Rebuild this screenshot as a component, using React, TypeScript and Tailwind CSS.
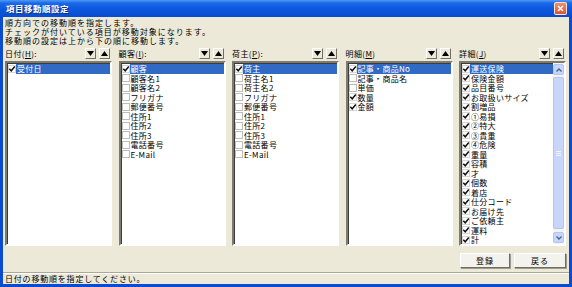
import React from 'react'

type Item = { label: string; on: boolean }

const jp = "font-['Noto_Sans_CJK_JP','Noto_Sans',sans-serif]"

const columns: { title: string; key: string; colon: boolean; items: Item[]; scroll?: boolean }[] = [
  { title: '日付', key: 'H', colon: true, items: [{ label: '受付日', on: true }] },
  {
    title: '顧客',
    key: 'I',
    colon: true,
    items: [
      { label: '顧客', on: true },
      ...['顧客名1', '顧客名2', 'フリガナ', '郵便番号', '住所1', '住所2', '住所3', '電話番号', 'E-Mail'].map((l) => ({ label: l, on: false })),
    ],
  },
  {
    title: '荷主',
    key: 'P',
    colon: true,
    items: [
      { label: '荷主', on: true },
      ...['荷主名1', '荷主名2', 'フリガナ', '郵便番号', '住所1', '住所2', '住所3', '電話番号', 'E-Mail'].map((l) => ({ label: l, on: false })),
    ],
  },
  {
    title: '明細',
    key: 'M',
    colon: false,
    items: [
      { label: '記事・商品No', on: true },
      { label: '記事・商品名', on: false },
      { label: '単価', on: false },
      { label: '数量', on: true },
      { label: '金額', on: true },
    ],
  },
  {
    title: '詳細',
    key: 'J',
    colon: false,
    scroll: true,
    items: [
      '運送保険', '保険金額', '品目番号', 'お取扱いサイズ', '割増品', '①易損', '②特大', '③貴重', '④危険',
      '重量', '容積', '才', '個数', '着店', '仕分コード', 'お届け先', 'ご依頼主', '運料', '計',
    ].map((l) => ({ label: l, on: true })),
  },
]

function CheckBox({ on }: { on: boolean }) {
  return (
    <svg width="8" height="8" viewBox="0 0 8 8" className="shrink-0">
      <rect x="0.5" y="0.5" width="7" height="7" fill="white" stroke={on ? '#d6d6d6' : '#bdbdbd'} />
      {on && <path d="M1.3 3.8 L3.2 5.8 L6.8 1.6" stroke="#111" strokeWidth="1.5" fill="none" />}
    </svg>
  )
}

function ArrowButton({ up }: { up?: boolean }) {
  return (
    <div className="w-[11px] h-[11px] flex items-center justify-center bg-[#ece9d8] border border-t-white border-l-white border-r-[#716f64] border-b-[#716f64]">
      <svg width="7" height="5" viewBox="0 0 7 5">
        {up ? <path d="M0 5 L3.5 0 L7 5 Z" fill="#000" /> : <path d="M0 0 L7 0 L3.5 5 Z" fill="#000" />}
      </svg>
    </div>
  )
}

function ScrollArrow({ up }: { up?: boolean }) {
  return (
    <div className="h-[11px] rounded-[2px] bg-[#c5d5fb] border border-[#b3c6f3] flex items-center justify-center">
      <svg width="6" height="4" viewBox="0 0 6 4">
        <path d={up ? 'M0.5 3.5 L3 1 L5.5 3.5' : 'M0.5 0.5 L3 3 L5.5 0.5'} stroke="#4d6185" strokeWidth="1.3" fill="none" />
      </svg>
    </div>
  )
}

function ListColumn({ col }: { col: (typeof columns)[number] }) {
  return (
    <div className="flex flex-col">
      <div className="flex items-center justify-between h-[11px] pr-[2px]">
        <span className="text-[8px] tracking-[0.4px] leading-none text-black">
          {col.title}(<span className="underline">{col.key}</span>){col.colon ? ':' : ''}
        </span>
        <div className="flex gap-[3px]">
          <ArrowButton />
          <ArrowButton up />
        </div>
      </div>
      <div className="mt-[2px] h-[185px] flex bg-white border-2 border-t-[#7d7b70] border-l-[#7d7b70] border-b-white border-r-white shadow-[inset_1px_1px_0_#3c3c3c]">
        <div className="flex-1 flex flex-col pt-[1px]">
          {col.items.map((it, i) => (
            <div key={i} className="flex items-center h-[9.5px]">
              <div className="w-[9px] pl-[1px] flex items-center">
                <CheckBox on={it.on} />
              </div>
              <span
                className={
                  'flex-1 h-full pl-[1px] text-[8px] tracking-[0.3px] leading-[9.5px] whitespace-nowrap ' +
                  (i === 0 ? 'bg-[#316ac5] text-white' : 'text-black')
                }
              >
                {it.label}
              </span>
            </div>
          ))}
        </div>
        {col.scroll && (
          <div className="w-[11px] flex flex-col bg-[#f4f3ee] py-[1px]">
            <ScrollArrow up />
            <div className="flex-1 flex flex-col py-[2px]">
              <div className="h-[152px] rounded-[2px] bg-[#c8d6fa] border border-[#b2c5f2] flex flex-col items-center justify-center gap-[1px]">
                <div className="w-[5px] h-[1px] bg-[#eef3ff]" />
                <div className="w-[5px] h-[1px] bg-[#eef3ff]" />
                <div className="w-[5px] h-[1px] bg-[#eef3ff]" />
              </div>
            </div>
            <ScrollArrow />
          </div>
        )}
      </div>
    </div>
  )
}

export default function App() {
  return (
    <div className={`w-[572px] h-[287px] flex flex-col bg-[#0a4bd0] ${jp}`}>
      {/* title bar */}
      <div className="h-[17px] shrink-0 flex items-center justify-between pl-[6px] pr-[5px] bg-[linear-gradient(to_bottom,#4e9bf7_0%,#1b68e6_18%,#0b57dd_55%,#0a4cce_100%)]">
        <span className="text-[8.5px] tracking-[0.5px] leading-none font-bold text-white [text-shadow:1px_1px_0_#0a2f8a]">項目移動順設定</span>
        <div className="w-[13px] h-[13px] rounded-[2px] border border-white/80 bg-[linear-gradient(to_bottom,#f0906e,#d9552e)] flex items-center justify-center">
          <svg width="7" height="7" viewBox="0 0 7 7">
            <path d="M1 1 L6 6 M6 1 L1 6" stroke="white" strokeWidth="1.6" />
          </svg>
        </div>
      </div>

      {/* body */}
      <div className="flex-1 mx-[3px] mb-[3px] bg-[#ece9d8] flex flex-col">
        <div className="pl-[2px] pr-[3px] pt-[1px]">
          <div className="text-[8px] tracking-[1px] leading-[9px] text-black">
            <p>順方向での移動順を指定します。</p>
            <p>チェックが付いている項目が移動対象になります。</p>
            <p>移動順の設定は上から下の順に移動します。</p>
          </div>

          <div className="mt-[3px] grid grid-cols-5 gap-x-[6.5px]">
            {columns.map((c) => (
              <ListColumn key={c.title} col={c} />
            ))}
          </div>

          <div className="mt-[7px] flex justify-end gap-[4px]">
            <button className="w-[50px] h-[15px] bg-[#f3f2ec] border border-t-white border-l-white border-r-[#716f64] border-b-[#716f64] shadow-[1px_1px_0_#9d9b8f] text-[8px] tracking-[1px] leading-none text-black">
              登録
            </button>
            <button className="w-[52px] h-[15px] bg-[#f3f2ec] border border-t-white border-l-white border-r-[#716f64] border-b-[#716f64] shadow-[1px_1px_0_#9d9b8f] text-[8px] tracking-[1px] leading-none text-black">
              戻る
            </button>
          </div>
        </div>

        {/* status bar */}
        <div className="mt-auto h-[12px] border-t border-t-[#aca899] shadow-[inset_0_1px_0_white] flex items-center pl-[2px]">
          <span className="text-[8px] tracking-[0.8px] leading-none text-black">日付の移動順を指定してください。</span>
        </div>
      </div>
    </div>
  )
}
